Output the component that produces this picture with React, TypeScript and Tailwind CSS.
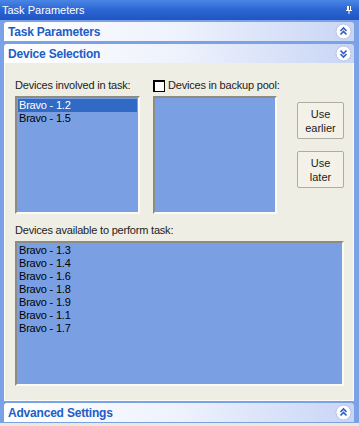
import React from "react";

const font = { fontFamily: '"Liberation Sans", Arial, sans-serif' };

function Chevron({ up }: { up: boolean }) {
  return (
    <svg width="17" height="17" viewBox="0 0 17 17">
      <circle cx="8.5" cy="8.5" r="7.5" fill="#fff" stroke="#b9c4e0" strokeWidth="1" />
      {up ? (
        <path d="M5.5 8 L8.5 5 L11.5 8 M5.5 11.5 L8.5 8.5 L11.5 11.5" fill="none" stroke="#2e5ec2" strokeWidth="1.6" />
      ) : (
        <path d="M5.5 5.5 L8.5 8.5 L11.5 5.5 M5.5 9 L8.5 12 L11.5 9" fill="none" stroke="#2e5ec2" strokeWidth="1.6" />
      )}
    </svg>
  );
}

function Header({ title, up }: { title: string; up: boolean }) {
  return (
    <div className="h-[19px] flex items-center justify-between pl-[4px] pr-[2px] rounded-t-[3px] bg-gradient-to-r from-white via-[#eef2fc] to-[#c8d5f5]">
      <span className="text-[12px] tracking-[-0.2px] font-bold text-[#215dc6] leading-none">{title}</span>
      <Chevron up={up} />
    </div>
  );
}

function ListBox({ items, selected, className }: { items: string[]; selected?: number; className: string }) {
  return (
    <div className={"bg-[#7aa0e3] border-2 border-t-[#8e8c82] border-l-[#8e8c82] border-b-[#fbfaf6] border-r-[#fbfaf6] pt-px px-px " + className}>
      {items.map((it, i) => (
        <div
          key={it}
          className={"h-[13px] leading-[13px] pl-[1px] text-[11px] tracking-[-0.2px] whitespace-nowrap " + (i === selected ? "bg-[#316ac5] text-white" : "text-black")}
        >
          {it}
        </div>
      ))}
    </div>
  );
}

function PaneButton({ lines }: { lines: string[] }) {
  return (
    <div className="w-[47px] h-[37px] flex flex-col items-center justify-center bg-[#f3f1e8] border border-[#aeada2] rounded-[2px] text-[11px] leading-[14px] text-[#1c1c1c]">
      {lines.map((l) => (
        <span key={l}>{l}</span>
      ))}
    </div>
  );
}

export default function App() {
  return (
    <div className="w-[359px] h-[426px] flex flex-col bg-[#ece9d8] overflow-hidden" style={font}>
      <div className="h-[20px] flex items-center justify-between pl-[2px] pr-[6px] bg-gradient-to-b from-[#4a86e4] via-[#2c64d3] to-[#1f55c2] text-white">
        <span className="text-[11px] leading-none">Task Parameters</span>
        <svg width="8" height="10" viewBox="0 0 8 10">
          <path d="M2 1 H6 V5 H7 V6 H1 V5 H2 Z" fill="#fff" />
          <rect x="3.5" y="6" width="1" height="3" fill="#fff" />
          <rect x="4" y="1" width="1" height="4" fill="#1f55c2" />
        </svg>
      </div>
      <div className="flex flex-col gap-[3px] bg-[#7ba1e6] pl-[4px] pr-[5px] pt-[2px] pb-[1px]">
        <Header title="Task Parameters" up />
        <div className="flex flex-col">
          <Header title="Device Selection" up={false} />
          <div className="h-[338px] bg-[#efeee4] border border-[#fbfbf7] border-t-0 flex flex-col pl-[10px] pr-[9px]">
            <div className="flex mt-[13px]">
              <div className="flex flex-col w-[125px]">
                <div className="h-[19px] flex items-center text-[11px] tracking-[-0.2px] whitespace-nowrap text-[#222]">Devices involved in task:</div>
                <ListBox items={["Bravo - 1.2", "Bravo - 1.5"]} selected={0} className="h-[118px] mt-[1px]" />
              </div>
              <div className="flex flex-col w-[124px] ml-[13px]">
                <div className="h-[19px] flex items-center gap-[3px] text-[11px] tracking-[-0.2px] whitespace-nowrap text-[#222]">
                  <div className="w-[12px] h-[12px] shrink-0 bg-white border border-black border-l-2 border-t-2" />
                  <span>Devices in backup pool:</span>
                </div>
                <ListBox items={[]} className="h-[118px] mt-[1px]" />
              </div>
              <div className="flex flex-col gap-[12px] ml-auto mt-[26px]">
                <PaneButton lines={["Use", "earlier"]} />
                <PaneButton lines={["Use", "later"]} />
              </div>
            </div>
            <div className="h-[19px] mt-[7px] flex items-center text-[11px] tracking-[-0.2px] whitespace-nowrap text-[#222]">Devices available to perform task:</div>
            <ListBox
              items={["Bravo - 1.3", "Bravo - 1.4", "Bravo - 1.6", "Bravo - 1.8", "Bravo - 1.9", "Bravo - 1.1", "Bravo - 1.7"]}
              className="h-[145px] mt-[1px] pt-[3px]"
            />
          </div>
        </div>
        <div className="mt-[-1px]">
          <Header title="Advanced Settings" up />
        </div>
      </div>
    </div>
  );
}
